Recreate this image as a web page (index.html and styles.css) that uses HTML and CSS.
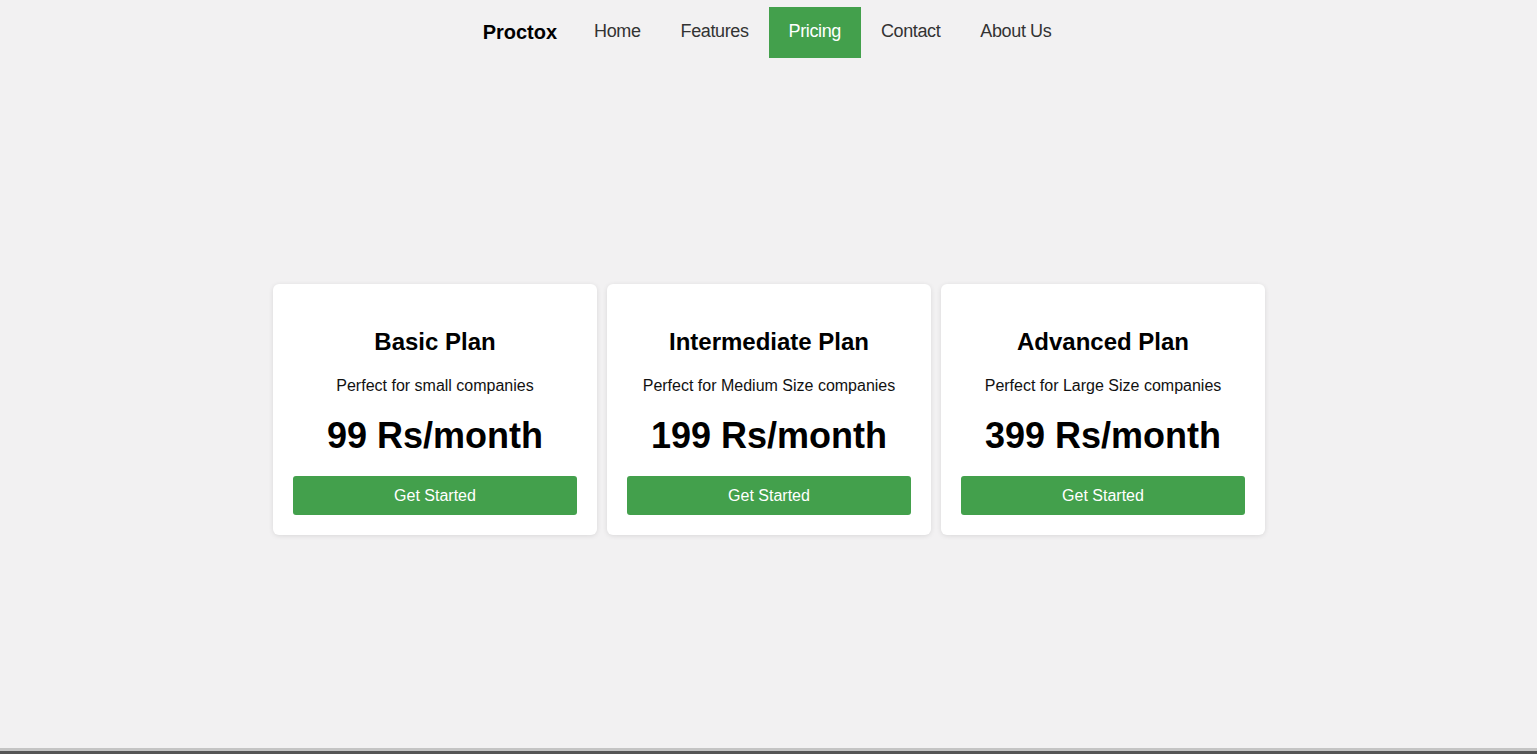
FILE: index.html
```html
<!DOCTYPE html>
<html lang="en">
<head>
<meta charset="utf-8">
<title>Proctox - Pricing</title>
<link rel="stylesheet" href="styles.css">
</head>
<body>
<nav class="nav">
  <span class="brand">Proctox</span>
  <a class="nav-link" href="#">Home</a>
  <a class="nav-link" href="#">Features</a>
  <a class="nav-link active" href="#">Pricing</a>
  <a class="nav-link" href="#">Contact</a>
  <a class="nav-link" href="#">About Us</a>
</nav>
<main class="main">
  <div class="cards">
    <div class="card">
      <h2 class="card-title">Basic Plan</h2>
      <p class="card-desc">Perfect for small companies</p>
      <div class="card-price">99 Rs/month</div>
      <a class="btn" href="#">Get Started</a>
    </div>
    <div class="card">
      <h2 class="card-title">Intermediate Plan</h2>
      <p class="card-desc">Perfect for Medium Size companies</p>
      <div class="card-price">199 Rs/month</div>
      <a class="btn" href="#">Get Started</a>
    </div>
    <div class="card">
      <h2 class="card-title">Advanced Plan</h2>
      <p class="card-desc">Perfect for Large Size companies</p>
      <div class="card-price">399 Rs/month</div>
      <a class="btn" href="#">Get Started</a>
    </div>
  </div>
</main>
<div class="bottom-bar"></div>
</body>
</html>
```

FILE: styles.css
```css
* { box-sizing: border-box; }
html, body { margin: 0; padding: 0; }
body {
  background: #f2f1f2;
  font-family: "Liberation Sans", Arial, sans-serif;
  color: #000;
  overflow: hidden;
}
.nav {
  height: 65px;
  display: flex;
  justify-content: center;
  align-items: flex-start;
  padding-top: 7px;
}
.brand {
  font-size: 20px;
  font-weight: bold;
  line-height: 23px;
  padding: 0 17px;
  margin-top: 14px;
  color: #000;
}
.nav-link {
  display: block;
  font-size: 18px;
  line-height: 21px;
  letter-spacing: -0.38px;
  padding: 14px 20px 16px;
  color: #333;
  text-decoration: none;
}
.nav-link.active {
  background: #43a04c;
  color: #fff;
}
.main {
  height: calc(100vh - 65px);
  display: flex;
  align-items: center;
  justify-content: center;
  padding-left: 1px;
}
.cards {
  display: flex;
  gap: 10px;
}
.card {
  width: 324px;
  background: #fff;
  border-radius: 6px;
  box-shadow: 0 1px 5px rgba(0,0,0,0.10);
  padding: 20px;
  text-align: center;
}
.card-title {
  font-size: 24px;
  font-weight: bold;
  line-height: 28px;
  margin: 24px 0 21px;
}
.card-desc {
  font-size: 16px;
  line-height: 18px;
  margin: 0 0 20px;
  color: #111;
}
.card-price {
  font-size: 36px;
  font-weight: bold;
  line-height: 41px;
  margin: 0 0 20px;
}
.btn {
  display: block;
  background: #43a04c;
  color: #fff;
  text-decoration: none;
  font-size: 16px;
  line-height: 19px;
  padding: 10px;
  border-radius: 3px;
}
.bottom-bar {
  position: fixed;
  left: 0;
  right: 0;
  bottom: 0;
  height: 6px;
  background: #c4c4c4;
  border-bottom: 3px solid #555;
}
```
